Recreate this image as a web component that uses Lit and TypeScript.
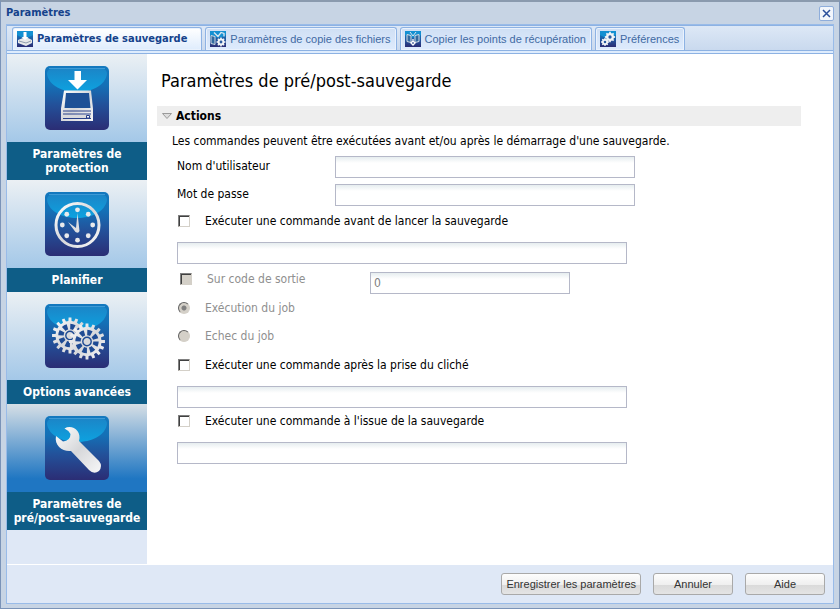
import { LitElement, html, css, svg } from "lit";
import { customElement, state } from "lit/decorators.js";
import { classMap } from "lit/directives/class-map.js";

type IconName =
  | "drive"
  | "clock"
  | "gears"
  | "wrench"
  | "tab-drive"
  | "tab-copy"
  | "tab-recovery"
  | "tab-prefs";

/** Outline of a toothed wheel centred on the origin. */
const gearPath = (teeth: number, outer: number, inner: number): string => {
  const step = (Math.PI * 2) / teeth;
  const at = (r: number, a: number) => `${(Math.cos(a) * r).toFixed(2)} ${(Math.sin(a) * r).toFixed(2)}`;
  let d = "";
  for (let i = 0; i < teeth; i++) {
    const a = i * step;
    d += `${i ? "L" : "M"}${at(inner, a - step * 0.28)}L${at(outer, a - step * 0.2)}L${at(outer, a + step * 0.2)}L${at(inner, a + step * 0.28)}`;
  }
  return d + "Z";
};

const wheel = (x: number, y: number) => svg`
  <g transform="translate(${x} ${y})">
    <path d=${gearPath(16, 18, 14.5)} fill="url(#metal)"></path>
    <circle r="9" fill="none" stroke="#1f4b94" stroke-width="5.4" stroke-dasharray="4.2 2.868"></circle>
    <circle r="4.2" fill="none" stroke="#1f4b94" stroke-width="1.4"></circle>
  </g>`;

const smallGear = (x: number, y: number, r: number) => svg`
  <g transform="translate(${x} ${y})">
    <path d=${gearPath(8, r, r * 0.78)} fill="#f2f4f6"></path>
    <circle r=${r * 0.32} fill="#2a5ba0"></circle>
  </g>`;

const glyphs = {
  drive: svg`
    <path d="M29.500 5h6.500v9h6l-9.500 9.500-9.500-9.500h6.500z" fill="#fff"></path>
    <path d="M19 24.500h27l2 18v12.500H16V42.500z" fill="url(#metal)"></path>
    <path d="M21 27h23l1.500 15h-26z" fill="#1d5096"></path>
    <path d="M18 45h28M18 48h28" stroke="#28408a"></path>
    <path d="M18.500 49h27.500v4h-27.500z" fill="#d9dadd"></path>
    <path d="M18 52.500h28" stroke="#28408a"></path>
    <path d="M41.500 49.500h3v2.500h-3z" fill="#fff" stroke="#28408a"></path>`,
  clock: svg`
    <circle cx="32.500" cy="33" r="21.500" fill="none" stroke="url(#metal)" stroke-width="3"></circle>
    ${[0, 1, 2, 3, 4, 5, 6, 7].map(
      (i) => svg`<circle
        cx=${32.5 + Math.cos((i * Math.PI) / 4) * 15.2}
        cy=${33 + Math.sin((i * Math.PI) / 4) * 15.2}
        r="2.400" fill="#e9eaec"></circle>`
    )}
    <path d="M32.500 21l2 18q-1 3-4 1l-7.500-10 8 6z" fill="#dedfe2"></path>`,
  gears: svg`${wheel(25, 31.5)}${wheel(42, 37.5)}`,
  wrench: svg`
    <path
      d="M19.500 12.500C27 8 37 15 34 25L54 45Q58 50 54 55Q49 59 44 54L26 35C18 36 9 30 11 20L18 25.500Q25.500 24.500 25.500 18Q23 14 19.500 12.500Z"
      fill="url(#metal)"
    ></path>`,
  "tab-drive": svg`
    <path d="M1 9l5-2h5l4 2v3l-6 3-8-3z" fill="#e8e9ea"></path>
    <path d="M2 10l7 2 5-2" fill="none" stroke="#8f9dac"></path>
    <path d="M6.500 1h3v5h2l-3.500 3-3.500-3h2z" fill="#fff"></path>`,
  "tab-copy": svg`
    <path d="M1 4.500l4 1v8l-4-1z" fill="#31699f" stroke="#cfd8e2"></path>
    <path d="M4 1.500l4 4 3-4 3 1v3" fill="none" stroke="#dce6ee" stroke-width="1.300"></path>
    ${smallGear(11, 11, 4.5)}`,
  "tab-recovery": svg`
    <path d="M2 3.500l4 1v7l-4-1zM14 3.500l-4 1v7l4-1z" fill="#31699f" stroke="#d3dce5"></path>
    <path d="M5 1l3 4 3-4" fill="none" stroke="#dce6ee"></path>
    <path d="M8 8v2M6 12l2-2 2 2-2 2z" fill="none" stroke="#fff" stroke-width="1.300"></path>`,
  "tab-prefs": svg`${smallGear(10, 6, 5.2)}${smallGear(5, 11, 4)}`,
};

@customElement("tile-icon")
export class TileIcon extends LitElement {
  static properties = { name: { type: String }, size: { type: Number } };
  declare name: IconName;
  declare size: number;

  static styles = css`
    :host {
      display: block;
      line-height: 0;
    }
  `;

  render() {
    const s = this.size;
    const large = s > 16;
    return html`<svg width=${s} height=${s} viewBox="0 0 ${s} ${s}" aria-hidden="true">
      <defs>
        <linearGradient id="back" x1="0" y1="0" x2="0" y2="1">
          <stop offset="0" stop-color="#1379bf"></stop>
          <stop offset="0.3" stop-color="#1470b6"></stop>
          <stop offset="0.600" stop-color="#23519a"></stop>
          <stop offset="1" stop-color="#2b2d74"></stop>
        </linearGradient>
        <linearGradient id="gloss" x1="0" y1="0" x2="0" y2="1">
          <stop offset="0" stop-color="#1b86c8"></stop>
          <stop offset="1" stop-color="#0da2e0"></stop>
        </linearGradient>
        <linearGradient id="metal" x1="0" y1="0" x2="1" y2="1">
          <stop offset="0" stop-color="#ffffff"></stop>
          <stop offset="0.500" stop-color="#d6d7da"></stop>
          <stop offset="1" stop-color="#f7f7f8"></stop>
        </linearGradient>
      </defs>
      <rect width=${s} height=${s} rx=${large ? 5 : 0} fill="url(#back)"></rect>
      ${large
        ? svg`<path d="M2 8Q2 3 7 3H57Q62 3 62 8C58 32 6 32 2 8Z" fill="url(#gloss)"></path>
            <path d="M4 2.500h56" stroke="#3d9ad6"></path>`
        : svg`<path d="M0 0h16v4Q8 9 0 4z" fill="#1390d2"></path>`}
      ${glyphs[this.name]}
    </svg>`;
  }
}

interface Entry {
  icon: IconName;
  label: string;
}

const TABS: Entry[] = [
  { icon: "tab-drive", label: "Paramètres de sauvegarde" },
  { icon: "tab-copy", label: "Paramètres de copie des fichiers" },
  { icon: "tab-recovery", label: "Copier les points de récupération" },
  { icon: "tab-prefs", label: "Préférences" },
];

const SECTIONS: Entry[] = [
  { icon: "drive", label: "Paramètres de protection" },
  { icon: "clock", label: "Planifier" },
  { icon: "gears", label: "Options avancées" },
  { icon: "wrench", label: "Paramètres de pré/post-sauvegarde" },
];

@customElement("app-root")
export class AppRoot extends LitElement {
  @state() private tab = 0;
  @state() private section = 3;

  static styles = css`
    :host {
      display: block;
      font: 12px/18px "DejaVu Sans Condensed", "DejaVu Sans", sans-serif;
      color: #000;
    }
    * {
      box-sizing: border-box;
    }
    button,
    input {
      font: inherit;
      color: inherit;
      margin: 0;
    }
    .window {
      display: flex;
      flex-direction: column;
      min-height: 100vh;
      padding: 0 5px 4px;
      background: #c7d4e4;
      border: 1px solid #7a93b8;
      border-top: 2px solid #8a9aae;
    }
    .titlebar {
      display: flex;
      align-items: center;
      justify-content: space-between;
      height: 22px;
    }
    .titlebar h1 {
      margin: 0;
      font-size: 11px;
      line-height: 14px;
      color: #15428b;
    }
    .close {
      display: flex;
      align-items: center;
      justify-content: center;
      width: 15px;
      height: 15px;
      padding: 0;
      border: 1px solid #8eaddb;
      border-radius: 2px;
      background: #f2f6fc;
    }
    .panel {
      display: flex;
      flex-direction: column;
      flex: 1;
      border: 1px solid #99bbe8;
      background: #fff;
    }
    .tabs {
      display: flex;
      gap: 3px;
      padding: 1px 5px 0;
      border-top: 1px solid #8db2e3;
      border-bottom: 1px solid #8db2e3;
      background: linear-gradient(#dde8f6, #c9d9ee);
    }
    .tab {
      display: flex;
      align-items: center;
      gap: 4px;
      height: 23px;
      padding: 0 5px 0 4px;
      border: 1px solid #8db2e3;
      border-bottom: 0;
      border-radius: 3px 3px 0 0;
      background: linear-gradient(#cfdff4, #deebfd);
      box-shadow: inset 0 0 0 1px #eaf2fd;
      font-family: "Liberation Sans", Arial, sans-serif;
      font-size: 11px;
      color: #416aa3;
      white-space: nowrap;
    }
    .tab.active {
      padding-right: 14px;
      background: linear-gradient(#fff, #deecfd);
      font-family: inherit;
      font-weight: bold;
      color: #15428b;
    }
    .strip {
      height: 3px;
      background: #deecfd;
      border-bottom: 1px solid #8db2e3;
    }
    .body {
      display: flex;
      flex: 1;
    }
    .side {
      width: 140px;
      flex: none;
      background: #dfe8f6;
    }
    .section {
      display: block;
      width: 100%;
      padding: 0;
      border: 0;
      background: none;
      line-height: 14px;
      font-weight: bold;
      color: #fff;
      text-align: center;
    }
    .picture {
      display: flex;
      justify-content: center;
      padding: 12px 0;
      background: linear-gradient(#ebf0f4, #a4c8e8);
    }
    .section.active .picture {
      background: linear-gradient(#d6dfe6, #1f76c2 85%);
    }
    .caption {
      display: block;
      padding: 5px 2px;
      background: #0e5d87;
    }
    .content {
      flex: 1;
      min-width: 0;
      padding: 16px 32px 16px 10px;
    }
    h2 {
      margin: 0 0 14px 4px;
      font-size: 18px;
      line-height: 22px;
      font-weight: normal;
    }
    .group {
      display: flex;
      align-items: center;
      gap: 4px;
      width: 100%;
      height: 20px;
      padding: 0 5px;
      border: 0;
      background: #eee;
      font-weight: bold;
    }
    .form {
      padding: 0 20px;
    }
    .intro {
      margin: 6px 0 6px -5px;
    }
    .fields {
      display: grid;
      grid-template-columns: 158px minmax(0, 300px);
      row-gap: 6px;
      padding-bottom: 2px;
      line-height: 20px;
    }
    .text {
      display: block;
      width: 100%;
      height: 22px;
      padding: 0 3px;
      border: 1px solid #b5b8c8;
      border-radius: 0;
      outline: 0;
      background: linear-gradient(#e6edef, #fff 6px);
    }
    .text:disabled {
      color: #808080;
    }
    .option {
      display: flex;
      align-items: center;
      gap: 15px;
      height: 26px;
      padding-left: 1px;
    }
    .command {
      max-width: 450px;
      padding: 8px 0 0;
    }
    .exit {
      display: grid;
      grid-template-columns: 193px minmax(0, 200px);
      padding-top: 8px;
    }
    .exit .option {
      height: 14px;
      padding-left: 3px;
    }
    .option.job {
      height: 28px;
    }
    .jobs {
      padding-bottom: 2px;
    }
    .off {
      color: #8f8f8f;
    }
    .tick {
      appearance: none;
      width: 12px;
      height: 12px;
      border: 1px solid;
      border-color: #808080 #d4d0c8 #d4d0c8 #808080;
      box-shadow: inset 1px 1px 0 #404040;
      background: #fff;
    }
    .tick:disabled {
      background: #d4d0c8;
    }
    .dot {
      appearance: none;
      width: 12px;
      height: 12px;
      border: 1px solid;
      border-color: #606060 #d4d0c8 #d4d0c8 #606060;
      border-radius: 50%;
      background: #d4d0c8;
    }
    .dot:checked {
      background: radial-gradient(circle, #808080 2px, #d4d0c8 3px);
    }
    .footer {
      display: flex;
      justify-content: flex-end;
      gap: 12px;
      padding: 8px;
      border-top: 1px solid #fff;
      background: #dfe8f6;
    }
    .action {
      min-width: 80px;
      height: 22px;
      padding: 0 4px;
      border: 1px solid #a9a9a9;
      border-radius: 3px;
      background: linear-gradient(#fdfdfd, #efefef 54%, #dadada 56%, #e4e4e4);
      font-family: "Liberation Sans", Arial, sans-serif;
      font-size: 11px;
      color: #333;
    }
  `;

  private command(id: string, label: string) {
    return html`
      <div class="option">
        <input class="tick" type="checkbox" id=${id} />
        <label for=${id}>${label}</label>
      </div>
      <div class="command"><input class="text" type="text" aria-label=${label} /></div>
    `;
  }

  render() {
    return html`
      <div class="window">
        <header class="titlebar">
          <h1>Paramètres</h1>
          <button class="close" aria-label="Fermer">
            <svg width="9" height="9" viewBox="0 0 9 9" aria-hidden="true">
              <path d="M1 1l7 7M8 1l-7 7" stroke="#2a4f9c" stroke-width="1.500"></path>
            </svg>
          </button>
        </header>
        <div class="panel">
          <nav class="tabs" role="tablist">
            ${TABS.map(
              (t, i) => html`<button
                role="tab"
                aria-selected=${i === this.tab ? "true" : "false"}
                class=${classMap({ tab: true, active: i === this.tab })}
                @click=${() => (this.tab = i)}
              >
                <tile-icon name=${t.icon} size="16"></tile-icon>${t.label}
              </button>`
            )}
          </nav>
          <div class="strip"></div>
          <div class="body">
            <nav class="side">
              ${SECTIONS.map(
                (s, i) => html`<button
                  class=${classMap({ section: true, active: i === this.section })}
                  @click=${() => (this.section = i)}
                >
                  <span class="picture"><tile-icon name=${s.icon} size="64"></tile-icon></span>
                  <span class="caption">${s.label}</span>
                </button>`
              )}
            </nav>
            <main class="content">
              <h2>Paramètres de pré/post-sauvegarde</h2>
              <button class="group" aria-expanded="true">
                <svg width="10" height="6" viewBox="0 0 10 6" aria-hidden="true">
                  <path d="M0.500 0.500h9l-4.500 5z" fill="#ddd" stroke="#9a9a9a"></path>
                </svg>
                Actions
              </button>
              <form class="form">
                <p class="intro">
                  Les commandes peuvent être exécutées avant et/ou après le démarrage d'une sauvegarde.
                </p>
                <div class="fields">
                  <label for="user">Nom d'utilisateur</label>
                  <input class="text" type="text" id="user" />
                  <label for="pass">Mot de passe</label>
                  <input class="text" type="password" id="pass" autocomplete="off" />
                </div>
                ${this.command("before", "Exécuter une commande avant de lancer la sauvegarde")}
                <section class="exit">
                  <div class="option off">
                    <input class="tick" type="checkbox" id="exit" disabled />
                    <label for="exit">Sur code de sortie</label>
                  </div>
                  <input class="text" type="text" value="0" aria-label="Code de sortie" disabled />
                </section>
                <section class="jobs">
                  <div class="option job off">
                    <input class="dot" type="radio" name="job" id="run" checked disabled />
                    <label for="run">Exécution du job</label>
                  </div>
                  <div class="option job off">
                    <input class="dot" type="radio" name="job" id="fail" disabled />
                    <label for="fail">Echec du job</label>
                  </div>
                </section>
                ${this.command("snapshot", "Exécuter une commande après la prise du cliché")}
                ${this.command("after", "Exécuter une commande à l'issue de la sauvegarde")}
              </form>
            </main>
          </div>
          <footer class="footer">
            <button class="action">Enregistrer les paramètres</button>
            <button class="action">Annuler</button>
            <button class="action">Aide</button>
          </footer>
        </div>
      </div>
    `;
  }
}
